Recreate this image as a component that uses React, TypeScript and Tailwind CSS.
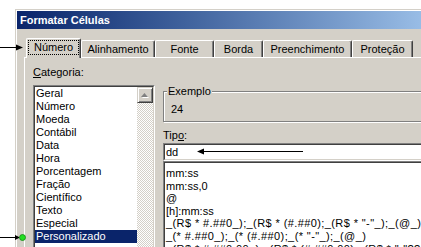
import React from 'react';

const categorias = [
  'Geral',
  'Número',
  'Moeda',
  'Contábil',
  'Data',
  'Hora',
  'Porcentagem',
  'Fração',
  'Científico',
  'Texto',
  'Especial',
  'Personalizado',
];

const tipos = [
  'mm:ss',
  'mm:ss,0',
  '@',
  '[h]:mm:ss',
  '_(R$ * #.##0_);_(R$ * (#.##0);_(R$ * "-"_);_(@_)',
  '_(* #.##0_);_(* (#.##0);_(* "-"_);_(@_)',
  '_(R$ * #.##0,00_);_(R$ * (#.##0,00);_(R$ * "-"??_);_(@_)',
];

const abas = [
  { nome: 'Alinhamento', w: 'w-[74px]' },
  { nome: 'Fonte', w: 'w-[59px]' },
  { nome: 'Borda', w: 'w-[49px]' },
  { nome: 'Preenchimento', w: 'w-[89px]' },
  { nome: 'Proteção', w: 'w-[61px]' },
];

const App: React.FC = () => {
  return (
    <div className="relative w-[421px] h-[247px] overflow-hidden bg-white text-[11px] text-black font-['Liberation_Sans',Arial,sans-serif]">
      {/* Dialog frame */}
      <div className="ml-[15px] mt-[9px] w-[440px] border-l border-t border-[#d4d0c8]">
        <div className="border-l border-t border-white bg-[#d4d0c8] h-[260px]">
          {/* Title bar */}
          <div className="h-[18px] bg-linear-to-r from-[#0a246a] to-[#a6caf0] flex items-center pl-[3px]">
            <span className="font-bold text-white text-[11px]">Formatar Células</span>
          </div>

          {/* Tabs */}
          <div className="relative z-10 mt-[9px] ml-[9px] h-[20px] -mb-px flex items-start">
            <div className="w-[55px] h-[20px] bg-[#d4d0c8] border-l border-t border-r border-white border-r-[#404040] rounded-t-[2px] shadow-[inset_-1px_0_0_#808080]">
              <div className="mx-[1px] mt-[1px] h-[15px] border border-dotted border-black flex items-center justify-center leading-none">
                Número
              </div>
            </div>
            {abas.map((a) => (
              <div
                key={a.nome}
                className={`${a.w} mt-[2px] h-[17px] border-l border-t border-r border-white border-r-[#404040] rounded-t-[2px] shadow-[inset_-1px_0_0_#808080] flex items-center justify-center leading-none`}
              >
                {a.nome}
              </div>
            ))}
          </div>

          {/* Panel */}
          <div className="ml-[7px] h-[220px] border-l border-t border-white pl-[8px] pt-[8px] flex">
            {/* Categoria */}
            <div className="w-[122px] shrink-0">
              <div className="h-[13px] leading-[13px]">
                <span className="underline underline-offset-1">C</span>ategoria:
              </div>
              <div className="mt-[6px] h-[180px] border border-t-[#808080] border-l-[#808080] border-r-white border-b-white">
                <div className="h-full flex border border-t-[#404040] border-l-[#404040] border-r-[#d4d0c8] border-b-[#d4d0c8]">
                  <div className="w-[102px] bg-white">
                    {categorias.map((c) => (
                      <div
                        key={c}
                        className={`h-[13px] leading-[13px] pl-[1px] ${
                          c === 'Personalizado' ? 'bg-[#0a246a] text-white' : ''
                        }`}
                      >
                        {c}
                      </div>
                    ))}
                  </div>
                  <div className="w-[16px] flex flex-col">
                    <div className="h-[16px] bg-[#d4d0c8] border border-t-[#d4d0c8] border-l-[#d4d0c8] border-r-[#404040] border-b-[#404040] shadow-[inset_1px_1px_0_#fff,inset_-1px_-1px_0_#808080] flex items-center justify-center">
                      <svg width="8" height="5" viewBox="0 0 8 5">
                        <polygon points="4.5,1 8,5 1,5" fill="#ffffff" />
                        <polygon points="3.5,0 7,4 0,4" fill="#808080" />
                      </svg>
                    </div>
                    <div className="flex-1 bg-[repeating-conic-gradient(#ffffff_0_25%,#d4d0c8_0_50%)] bg-[length:2px_2px]" />
                  </div>
                </div>
              </div>
            </div>

            {/* Exemplo / Tipo */}
            <div className="ml-[8px] mt-[19px] w-[300px] shrink-0">
              <div className="relative mt-[6px] h-[31px] border border-[#808080] shadow-[inset_1px_1px_0_#fff,1px_1px_0_#fff] pl-[7px] pt-[11px]">
                <span className="absolute -top-[7px] left-[3px] bg-[#d4d0c8] px-[1px] leading-[13px]">Exemplo</span>
                <div className="leading-[13px]">24</div>
              </div>

              <div className="mt-[7px] h-[13px] leading-[13px]">
                Tip<span className="underline underline-offset-1">o</span>:
              </div>

              <div className="mt-[1px] h-[18px] border border-t-[#808080] border-l-[#808080] border-r-white border-b-white">
                <div className="h-full bg-white border border-t-[#404040] border-l-[#404040] border-r-[#d4d0c8] border-b-[#d4d0c8] pl-[1px] flex items-center">
                  dd
                </div>
              </div>

              <div className="h-[120px] border border-t-[#808080] border-l-[#808080] border-r-white border-b-white">
                <div className="h-full bg-white border border-t-[#404040] border-l-[#404040] border-r-[#d4d0c8] border-b-[#d4d0c8] pl-[1px] pt-[4px]">
                  {tipos.map((t) => (
                    <div
                      key={t}
                      className={`h-[12.6px] leading-[12.6px] whitespace-pre ${t.length > 20 ? 'tracking-[0.4px]' : ''}`}
                    >
                      {t}
                    </div>
                  ))}
                </div>
              </div>
            </div>
          </div>
        </div>
      </div>

      {/* Annotation arrows */}
      <svg className="absolute left-0 top-[43px]" width="25" height="9" viewBox="0 0 25 9">
        <line x1="0" y1="4.5" x2="17" y2="4.5" stroke="#000" strokeWidth="1" />
        <polygon points="16,1.5 23,4.5 16,7.5" fill="#000" />
      </svg>

      <svg className="absolute left-0 top-[232px]" width="27" height="11" viewBox="0 0 27 11">
        <line x1="0" y1="5.5" x2="16" y2="5.5" stroke="#000" strokeWidth="1" />
        <polygon points="15,3 20,5.5 15,8" fill="#000" />
        <circle cx="22.5" cy="5.5" r="3" fill="#22dd22" stroke="#118811" strokeWidth="0.8" />
      </svg>

      <svg className="absolute left-[196px] top-[147px]" width="108" height="9" viewBox="0 0 108 9">
        <polygon points="1,4.5 8,1.5 8,7.5" fill="#000" />
        <line x1="7" y1="4.5" x2="107" y2="4.5" stroke="#000" strokeWidth="1.2" />
      </svg>
    </div>
  );
};

export default App;
